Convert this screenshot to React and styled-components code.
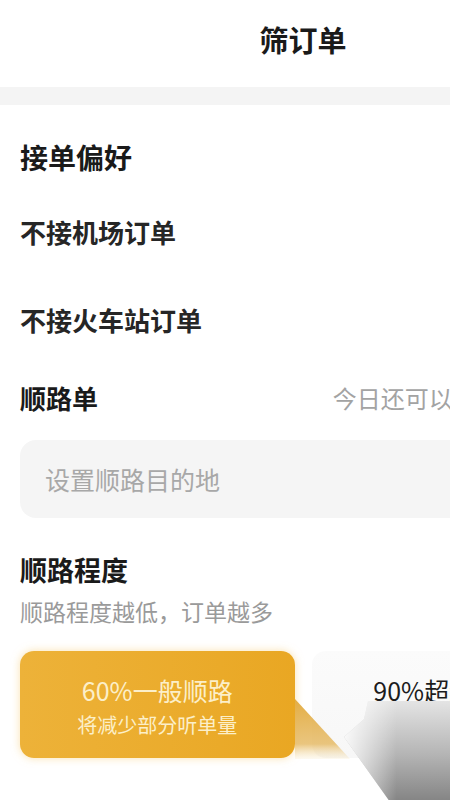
import React from 'react';
import styled, { createGlobalStyle } from 'styled-components';

const GlobalStyle = createGlobalStyle`
  html, body {
    margin: 0;
    padding: 0;
    overflow: hidden;
    background: #fff;
  }
  body {
    font-family: "Noto Sans CJK SC", "Noto Sans", sans-serif;
    color: #1f1f1f;
  }
`;

const Page = styled.div`
  width: 606px;
  min-height: 800px;
  background: #fff;
`;

const Header = styled.div`
  height: 87px;
  display: flex;
  align-items: center;
  justify-content: center;
  font-size: 29px;
  font-weight: 700;
  color: #1a1a1a;
  padding-bottom: 10px;
  box-sizing: border-box;
`;

const Band = styled.div`
  height: 18px;
  background: #f4f4f4;
`;

const Body = styled.div`
  padding: 0 20px;
  display: flex;
  flex-direction: column;
`;

const SectionTitle = styled.div`
  font-size: ${p => p.size || 27}px;
  font-weight: 700;
  line-height: 1;
  color: #1a1a1a;
  margin-top: ${p => p.top || 0}px;
`;

const Option = styled.div`
  font-size: 26px;
  font-weight: 700;
  line-height: 1;
  color: #262626;
  margin-top: ${p => p.top}px;
`;

const RowLine = styled.div`
  display: flex;
  align-items: center;
  justify-content: space-between;
  margin-top: 52px;
`;

const Hint = styled.div`
  font-size: 24px;
  color: #a3a3a3;
  white-space: nowrap;
  line-height: 1;
`;

const InputBox = styled.div`
  margin-top: 29px;
  height: 78px;
  border-radius: 16px;
  background: #f5f5f5;
  display: flex;
  align-items: center;
  padding-left: 25px;
  font-size: 25px;
  color: #a8a8a8;
`;

const Sub = styled.div`
  margin-top: 17px;
  font-size: 23px;
  line-height: 1;
  color: #9a9a9a;
`;

const Cards = styled.div`
  position: relative;
  margin-top: 28px;
  display: flex;
  gap: 17px;
`;

const Card = styled.div`
  position: relative;
  z-index: 1;
  width: 276px;
  height: 107px;
  border-radius: 14px;
  box-sizing: border-box;
  display: flex;
  flex-direction: column;
  align-items: center;
  padding-top: 24px;
  background: ${p => (p.active
    ? 'linear-gradient(90deg, #edb239 0%, #e9a723 100%)'
    : 'linear-gradient(180deg, #fbfbfb 0%, #f7f7f7 100%)')};
  box-shadow: ${p => (p.active ? '0 0 8px rgba(245, 200, 110, 0.55)' : 'none')};
  color: ${p => (p.active ? '#fcefc9' : '#1c1c1c')};
`;

const CardTitle = styled.div`
  font-size: 25px;
  line-height: 1.2;
  white-space: nowrap;
`;

const CardNote = styled.div`
  margin-top: 8px;
  font-size: 20px;
  line-height: 1.2;
  white-space: nowrap;
`;

const Beam = styled.svg`
  position: absolute;
  left: 274px;
  top: 38px;
  width: 200px;
  height: 120px;
  z-index: 2;
  pointer-events: none;
`;

export default function App() {
  return (
    <Page>
      <GlobalStyle />
      <Header>筛订单</Header>
      <Band />
      <Body>
        <SectionTitle size={28} top={38}>接单偏好</SectionTitle>
        <Option top={48}>不接机场订单</Option>
        <Option top={62}>不接火车站订单</Option>
        <RowLine>
          <SectionTitle size={26}>顺路单</SectionTitle>
          <Hint>今日还可以设置3次顺路</Hint>
        </RowLine>
        <InputBox>设置顺路目的地</InputBox>
        <SectionTitle size={27} top={38}>顺路程度</SectionTitle>
        <Sub>顺路程度越低，订单越多</Sub>
        <Cards>
          <Card active>
            <CardTitle>60%一般顺路</CardTitle>
            <CardNote>将减少部分听单量</CardNote>
          </Card>
          <Card>
            <CardTitle>90%超级顺路</CardTitle>
          </Card>
          <Beam viewBox="0 0 200 120">
            <defs>
              <linearGradient id="gold" x1="0" y1="0" x2="0" y2="1">
                <stop offset="0" stopColor="#e2a93a" stopOpacity="0.95" />
                <stop offset="0.75" stopColor="#e6bb68" stopOpacity="0.85" />
                <stop offset="1" stopColor="#f6e3b8" stopOpacity="0.2" />
              </linearGradient>
              <linearGradient id="smear" x1="0" y1="0" x2="0" y2="1">
                <stop offset="0" stopColor="#e4e4e4" />
                <stop offset="0.5" stopColor="#b4b4b4" />
                <stop offset="1" stopColor="#7c7c7c" />
              </linearGradient>
              <linearGradient id="fadeLeft" x1="0" y1="0" x2="1" y2="0">
                <stop offset="0" stopColor="#fff" stopOpacity="0.9" />
                <stop offset="0.35" stopColor="#fff" stopOpacity="0" />
              </linearGradient>
            </defs>
            <polygon points="1,10 1,70 56,70" fill="url(#gold)" />
            <polygon points="74,12 200,12 200,120 101,120 50,48 70,30" fill="url(#smear)" />
            <polygon points="74,12 200,12 200,120 101,120 50,48 70,30" fill="url(#fadeLeft)" />
          </Beam>
        </Cards>
      </Body>
    </Page>
  );
}
